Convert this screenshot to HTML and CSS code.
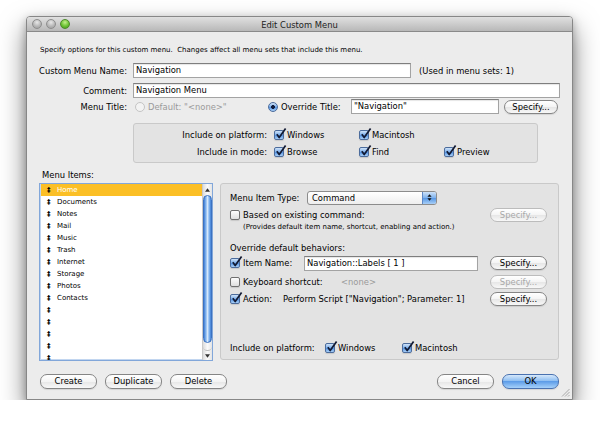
FILE: index.html
```html
<!DOCTYPE html>
<html>
<head>
    <title>Edit Custom Menu</title>
    <link rel="stylesheet" href="styles.css">
</head>

<body>
<div class="window">
    <div class="titlebar">
        <div class="lights">
            <span class="light"></span>
            <span class="light"></span>
            <span class="light zoom"></span>
        </div>
        <div class="title">Edit Custom Menu</div>
        <div></div>
    </div>

    <div class="content">
        <p class="intro">Specify options for this custom menu.&nbsp; Changes affect all menu sets that include this menu.</p>

        <div class="form-row name-row">
            <span class="label">Custom Menu Name:</span>
            <div class="field name-field">Navigation</div>
            <span class="used">(Used in menu sets: 1)</span>
        </div>
        <div class="form-row comment-row">
            <span class="label">Comment:</span>
            <div class="field grow">Navigation Menu</div>
        </div>
        <div class="form-row title-row">
            <span class="label">Menu Title:</span>
            <span class="radio-opt default-opt"><span class="radio dim"></span>Default: "&lt;none&gt;"</span>
            <span class="radio-opt override-opt"><span class="radio on"></span>Override Title:</span>
            <div class="field title-field">"Navigation"</div>
            <div class="btn title-btn">Specify...</div>
        </div>

        <div class="group platform-box">
            <div class="group-row">
                <span class="group-label">Include on platform:</span>
                <span class="check-opt"><span class="cb on"><svg viewBox="0 0 11 12"><path d="M1.8 6.2 L4.2 9.6 L10.6 0.4"/></svg></span>Windows</span>
                <span class="check-opt"><span class="cb on"><svg viewBox="0 0 11 12"><path d="M1.8 6.2 L4.2 9.6 L10.6 0.4"/></svg></span>Macintosh</span>
            </div>
            <div class="group-row">
                <span class="group-label">Include in mode:</span>
                <span class="check-opt"><span class="cb on"><svg viewBox="0 0 11 12"><path d="M1.8 6.2 L4.2 9.6 L10.6 0.4"/></svg></span>Browse</span>
                <span class="check-opt"><span class="cb on"><svg viewBox="0 0 11 12"><path d="M1.8 6.2 L4.2 9.6 L10.6 0.4"/></svg></span>Find</span>
                <span class="check-opt"><span class="cb on"><svg viewBox="0 0 11 12"><path d="M1.8 6.2 L4.2 9.6 L10.6 0.4"/></svg></span>Preview</span>
            </div>
        </div>

        <div class="section-label">Menu Items:</div>

        <div class="panes">
            <div class="list">
                <div class="list-rows">
                    <div class="list-row selected"><span class="handle">‡</span>Home</div>
                    <div class="list-row"><span class="handle">‡</span>Documents</div>
                    <div class="list-row"><span class="handle">‡</span>Notes</div>
                    <div class="list-row"><span class="handle">‡</span>Mail</div>
                    <div class="list-row"><span class="handle">‡</span>Music</div>
                    <div class="list-row"><span class="handle">‡</span>Trash</div>
                    <div class="list-row"><span class="handle">‡</span>Internet</div>
                    <div class="list-row"><span class="handle">‡</span>Storage</div>
                    <div class="list-row"><span class="handle">‡</span>Photos</div>
                    <div class="list-row"><span class="handle">‡</span>Contacts</div>
                    <div class="list-row"><span class="handle">‡</span></div>
                    <div class="list-row"><span class="handle">‡</span></div>
                    <div class="list-row"><span class="handle">‡</span></div>
                    <div class="list-row"><span class="handle">‡</span></div>
                    <div class="list-row"><span class="handle">‡</span></div>
                </div>
                <div class="scrollbar">
                    <div class="sb-up"><svg viewBox="0 0 6 4"><path d="M0 4 L3 0 L6 4 Z"/></svg></div>
                    <div class="sb-thumb"></div>
                    <div class="sb-cap"></div>
                    <div class="sb-down"><svg viewBox="0 0 6 4"><path d="M0 0 L6 0 L3 4 Z"/></svg></div>
                </div>
            </div>

            <div class="group props">
                <div class="prop-row type-row">
                    <span class="type-label">Menu Item Type:</span>
                    <div class="popup">
                        <span class="popup-text">Command</span>
                        <span class="popup-arrows"><svg viewBox="0 0 6 10"><path d="M0.5 4 L3 1 L5.5 4 Z M0.5 6 L5.5 6 L3 9 Z"/></svg></span>
                    </div>
                </div>
                <div class="prop-row based-row">
                    <span class="cb"></span>Based on existing command:
                    <div class="btn side-btn disabled">Specify...</div>
                </div>
                <div class="prop-row note-row">(Provides default item name, shortcut, enabling and action.)</div>
                <div class="prop-row override-row">Override default behaviors:</div>
                <div class="prop-row item-row">
                    <span class="cb on"><svg viewBox="0 0 11 12"><path d="M1.8 6.2 L4.2 9.6 L10.6 0.4"/></svg></span>
                    <span class="item-label">Item Name:</span>
                    <div class="field item-field">Navigation::Labels [ 1 ]</div>
                    <div class="btn side-btn">Specify...</div>
                </div>
                <div class="prop-row key-row">
                    <span class="cb"></span>
                    <span class="key-label">Keyboard shortcut:</span>
                    <span class="none">&lt;none&gt;</span>
                    <div class="btn side-btn disabled">Specify...</div>
                </div>
                <div class="prop-row action-row">
                    <span class="cb on"><svg viewBox="0 0 11 12"><path d="M1.8 6.2 L4.2 9.6 L10.6 0.4"/></svg></span>
                    <span class="action-label">Action:</span>
                    <span>Perform Script ["Navigation"; Parameter: 1]</span>
                    <div class="btn side-btn">Specify...</div>
                </div>
                <div class="prop-row platform-row">
                    <span class="platform-label">Include on platform:</span>
                    <span class="platform-opt"><span class="cb on"><svg viewBox="0 0 11 12"><path d="M1.8 6.2 L4.2 9.6 L10.6 0.4"/></svg></span>Windows</span>
                    <span class="platform-opt"><span class="cb on"><svg viewBox="0 0 11 12"><path d="M1.8 6.2 L4.2 9.6 L10.6 0.4"/></svg></span>Macintosh</span>
                </div>
            </div>
        </div>

        <div class="buttons">
            <div class="btn">Create</div>
            <div class="btn">Duplicate</div>
            <div class="btn">Delete</div>
            <div class="spacer"></div>
            <div class="btn">Cancel</div>
            <div class="btn ok">OK</div>
        </div>
    </div>

    <svg class="grip" viewBox="0 0 9 9"><path d="M8.5 1 L1 8.5 M8.5 4 L4 8.5 M8.5 7 L7 8.5"/></svg>
</div>
</body>
</html>
```

FILE: styles.css
```css
* {
    box-sizing: border-box;
}
body {
    margin: 0;
    padding: 16px 0 0 26px;
    background: #fff;
    font-family: "DejaVu Sans", sans-serif;
    font-size: 8.4px;
    color: #000;
}

.window {
    position: relative;
    width: 547px;
    height: 384px;
    background: #ececec;
    border: 1px solid #878787;
    border-radius: 4px 4px 0 0;
    box-shadow: 0 12px 26px rgba(0, 0, 0, 0.5), 0 3px 8px rgba(0, 0, 0, 0.25);
}

.titlebar {
    height: 15px;
    display: grid;
    grid-template-columns: 1fr auto 1fr;
    align-items: center;
    background: linear-gradient(#e0e0e0, #b8b8b8);
    border-bottom: 1px solid #8a8a8a;
    border-radius: 3px 3px 0 0;
}
.lights {
    display: flex;
    gap: 4px;
    padding-left: 5px;
}
.light {
    width: 10px;
    height: 10px;
    border-radius: 50%;
    border: 1px solid #8e8e8e;
    background: radial-gradient(circle at 50% 30%, #e8e8e8, #b4b4b4 60%, #9c9c9c);
}
.light.zoom {
    border-color: #4f8a2c;
    background: radial-gradient(circle at 50% 30%, #c4f08c, #6cc233 55%, #3f961c);
}
.title {
    color: #222;
    padding-top: 1px;
}

.content {
    padding: 13px 12px 0 12px;
}
.intro {
    margin: 0;
    padding-left: 1px;
    font-size: 7px;
    line-height: 10px;
    height: 10px;
}

.form-row {
    display: flex;
    align-items: center;
    white-space: nowrap;
}
.name-row {
    margin-top: 8px;
    height: 15px;
}
.comment-row {
    margin-top: 5px;
    height: 15px;
}
.title-row {
    height: 17px;
}
.label {
    width: 88px;
    margin-right: 6px;
    text-align: right;
}
.field {
    height: 15px;
    line-height: 13px;
    padding: 0 2px;
    background: #fff;
    border: 1px solid #a3a3a3;
    border-top-color: #7e7e7e;
    box-shadow: inset 0 1px 1px rgba(0, 0, 0, 0.1);
    white-space: nowrap;
    overflow: hidden;
}
.name-field {
    width: 278px;
}
.used {
    margin-left: 8px;
}
.grow {
    flex: 1;
}
.radio-opt {
    display: flex;
    align-items: center;
}
.default-opt {
    width: 135px;
    padding-left: 2px;
    color: #9a9a9a;
}
.override-opt {
    width: 83px;
}
.title-field {
    width: 148px;
}
.title-btn {
    margin-left: 5px;
    width: 54px;
}

.radio {
    flex: none;
    width: 10px;
    height: 10px;
    margin-right: 3px;
    border-radius: 50%;
    border: 1px solid #777;
    background: linear-gradient(#fff, #dedede);
}
.radio.dim {
    border-color: #c4c4c4;
    background: #f3f3f3;
}
.radio.on {
    border-color: #4c6c9c;
    background: radial-gradient(circle, #111c3c 0 1.6px, transparent 2.2px),
        linear-gradient(#d0e3f8, #78acea 50%, #4f90e2 51%, #a9cff7);
}

.cb {
    position: relative;
    flex: none;
    width: 10px;
    height: 10px;
    margin-right: 3px;
    border: 1px solid #707070;
    border-radius: 2px;
    background: linear-gradient(#fdfdfd, #dfdfdf);
    box-shadow: 0 1px 1px rgba(0, 0, 0, 0.12);
}
.cb.on {
    border-color: #4c6c9c;
    background: linear-gradient(#d0e3f8, #78acea 50%, #4f90e2 51%, #a9cff7);
}
.cb svg {
    position: absolute;
    left: 0;
    top: -3px;
    width: 11px;
    height: 12px;
    overflow: visible;
}
.cb path {
    fill: none;
    stroke: #121a33;
    stroke-width: 1.7;
    stroke-linejoin: round;
}

.group {
    background: #e3e3e3;
    border: 1px solid #c9c9c9;
    border-radius: 3px;
}
.platform-box {
    margin: 8px 0 0 94px;
    width: 405px;
    height: 40px;
    padding-top: 4px;
}
.group-row {
    display: flex;
    align-items: center;
    height: 14px;
}
.group-row + .group-row {
    margin-top: 3px;
}
.group-label {
    width: 140px;
    padding-right: 7px;
    text-align: right;
}
.check-opt {
    display: flex;
    align-items: center;
    width: 85px;
}

.section-label {
    margin-top: 7px;
    padding-left: 3px;
    line-height: 10px;
    height: 10px;
}

.panes {
    display: flex;
    margin-top: 3px;
    height: 178px;
}

.list {
    display: flex;
    width: 174px;
    height: 178px;
    background: #fff;
    border: 1px solid #82a7da;
    box-shadow: inset 0 0 0 1px #c2d6f0;
}
.list-rows {
    flex: 1;
    padding-left: 1px;
    overflow: hidden;
}
.list-row {
    display: flex;
    height: 12px;
    line-height: 12px;
    padding-left: 6px;
    font-size: 7px;
    white-space: nowrap;
}
.list-row.selected {
    background: #fbbf26;
    color: #fff;
}
.handle {
    width: 10px;
    font-weight: bold;
    color: #000;
}
.scrollbar {
    display: flex;
    flex-direction: column;
    width: 10px;
    border-left: 1px solid #c9c9c9;
    background: linear-gradient(to right, #dcdcdc, #fafafa 50%, #e4e4e4);
}
.sb-up,
.sb-down {
    display: flex;
    align-items: center;
    justify-content: center;
}
.sb-up {
    height: 11px;
}
.sb-down {
    height: 9px;
}
.sb-up svg,
.sb-down svg {
    width: 5px;
    height: 4px;
    fill: #333;
}
.sb-thumb {
    flex: 1;
    border: 1px solid #3b72c2;
    border-radius: 5px;
    background: linear-gradient(to right, #3f7fd6, #8fbdf1 30%, #d6e8fb 50%, #8fbdf1 70%, #3f7fd6);
}
.sb-cap {
    height: 8px;
    border-bottom: 1px solid #bbb;
    border-radius: 0 0 5px 5px;
}

.props {
    margin-left: 7px;
    width: 339px;
    height: 177px;
    padding: 6px 11px 0 9px;
}
.prop-row {
    display: flex;
    align-items: center;
    white-space: nowrap;
}
.type-row {
    height: 15px;
}
.type-label {
    width: 77px;
}
.popup {
    display: flex;
    width: 130px;
    height: 14px;
    border: 1px solid #8c8c8c;
    border-radius: 3px;
    background: linear-gradient(#fff, #eee);
    overflow: hidden;
}
.popup-text {
    flex: 1;
    padding-left: 4px;
    line-height: 12px;
}
.popup-arrows {
    display: flex;
    align-items: center;
    justify-content: center;
    width: 14px;
    border-left: 1px solid #5d88c6;
    background: linear-gradient(#cde2f9, #7cb0ec 50%, #5596e4 51%, #a9cff7);
}
.popup-arrows svg {
    width: 5px;
    height: 9px;
    fill: #111;
}
.based-row {
    margin-top: 2px;
    height: 15px;
}
.note-row {
    height: 10px;
    padding-left: 13px;
    font-size: 7px;
}
.override-row {
    margin-top: 11px;
    height: 10px;
}
.item-row {
    margin-top: 2px;
    height: 16px;
}
.item-label {
    width: 61px;
}
.item-field {
    width: 174px;
}
.key-row {
    margin-top: 3px;
    height: 16px;
}
.key-label {
    width: 98px;
}
.none {
    color: #9a9a9a;
}
.action-row {
    margin-top: 1px;
    height: 16px;
}
.action-label {
    width: 40px;
}
.platform-row {
    margin-top: 34px;
    height: 14px;
}
.platform-label {
    width: 95px;
}
.platform-opt {
    display: flex;
    align-items: center;
    width: 77px;
}

.btn {
    height: 14px;
    line-height: 12px;
    text-align: center;
    border: 1px solid #858585;
    border-radius: 7px;
    background: linear-gradient(#fff, #f4f4f4 50%, #e6e6e6 51%, #f8f8f8);
    box-shadow: 0 1px 1px rgba(0, 0, 0, 0.1);
    white-space: nowrap;
}
.btn.disabled {
    color: #a9a9a9;
    border-color: #bcbcbc;
    box-shadow: none;
}
.side-btn {
    width: 57px;
    margin-left: auto;
}

.buttons {
    display: flex;
    gap: 8px;
    margin-top: 13px;
    padding: 0 1px;
}
.buttons .btn {
    width: 57px;
    height: 15px;
    line-height: 13px;
}
.spacer {
    flex: 1;
}
.buttons .ok {
    border-color: #4a72b0;
    background: linear-gradient(#d6e8fb, #8fbff2 45%, #5e9de8 50%, #a6d1fa);
}

.grip {
    position: absolute;
    right: 2px;
    bottom: 2px;
    width: 9px;
    height: 9px;
}
.grip path {
    stroke: #9a9a9a;
    stroke-width: 0.8;
}
```
